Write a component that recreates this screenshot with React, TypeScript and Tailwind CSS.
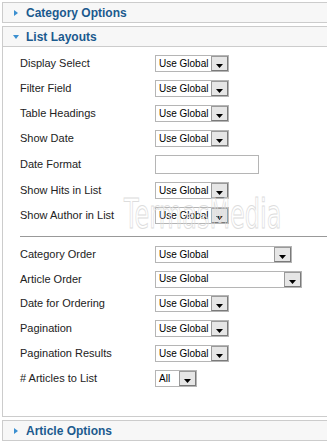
import React from "react";

const font = { fontFamily: '"Liberation Sans", Arial, sans-serif' };

function Arrow({ down }: { down?: boolean }) {
  return down ? (
    <svg width="8" height="6" viewBox="0 0 8 6" className="mr-[6px] ml-[9px] shrink-0">
      <polygon points="1,1 7,1 4,5" fill="#3b8fd0" />
    </svg>
  ) : (
    <svg width="8" height="8" viewBox="0 0 8 8" className="mr-[6px] ml-[9px] shrink-0">
      <polygon points="2,1 6,4 2,7" fill="#3b8fd0" />
    </svg>
  );
}

function Header({ title, down }: { title: string; down?: boolean }) {
  return (
    <div className="h-[19px] flex items-center bg-[#f7f7f7]">
      <Arrow down={down} />
      <span className="text-[12px] font-bold text-[#1b5a8e] leading-none whitespace-nowrap">{title}</span>
    </div>
  );
}

function Select({ value, width }: { value: string; width: number }) {
  return (
    <div
      className="h-[17px] border border-[#b5b5b5] bg-white flex items-center justify-between shrink-0"
      style={{ width }}
    >
      <span className="text-[10px] text-black pl-[3px] leading-none whitespace-nowrap">{value}</span>
      <div className="w-[17px] h-[15px] shrink-0 border border-[#7a7a7a] border-t-[#9a9a9a] border-l-[#9a9a9a] bg-[#e6e6e6] flex items-end justify-center pb-[2px]">
        <svg width="7" height="4" viewBox="0 0 7 4">
          <polygon points="0,0 7,0 3.5,4" fill="#000" />
        </svg>
      </div>
    </div>
  );
}

function Row({ label, children, h = 25 }: { label: string; children: React.ReactNode; h?: number }) {
  return (
    <div className="flex items-center" style={{ height: h }}>
      <div className="w-[135px] shrink-0 text-[11px] text-[#222] leading-none whitespace-nowrap">{label}</div>
      {children}
    </div>
  );
}

export default function App() {
  return (
    <div className="w-[327px] h-[443px] overflow-hidden bg-white relative" style={font}>
      <div className="pt-[2px] pl-[2px] w-[360px]">
        <div className="border border-[#cccccc]">
          <Header title="Category Options" />
        </div>
        <div className="border border-[#cccccc] mt-[3px]">
          <div className="border-b border-[#cccccc]">
            <Header title="List Layouts" down />
          </div>
          <div className="pl-[17px] pt-[4px] pb-[25px]">
            <Row label="Display Select"><Select value="Use Global" width={74} /></Row>
            <Row label="Filter Field"><Select value="Use Global" width={74} /></Row>
            <Row label="Table Headings"><Select value="Use Global" width={74} /></Row>
            <Row label="Show Date"><Select value="Use Global" width={74} /></Row>
            <Row label="Date Format" h={27}>
              <div className="w-[104px] h-[19px] border border-[#b5b5b5] bg-white" />
            </Row>
            <Row label="Show Hits in List"><Select value="Use Global" width={74} /></Row>
            <Row label="Show Author in List"><Select value="Use Global" width={74} /></Row>
            <div className="mt-[8px] mb-[5px] border-t border-[#999999]" />
            <Row label="Category Order"><Select value="Use Global" width={137} /></Row>
            <Row label="Article Order" h={24}><Select value="Use Global" width={147} /></Row>
            <Row label="Date for Ordering"><Select value="Use Global" width={74} /></Row>
            <Row label="Pagination"><Select value="Use Global" width={74} /></Row>
            <Row label="Pagination Results"><Select value="Use Global" width={74} /></Row>
            <Row label="# Articles to List"><Select value="All" width={42} /></Row>
          </div>
        </div>
        <div className="border border-[#cccccc] mt-[3px]">
          <Header title="Article Options" />
        </div>
      </div>
      <div
        className="absolute left-[124px] top-[194px] text-[40px] leading-none text-transparent pointer-events-none [-webkit-text-stroke:1px_#dddddd] origin-left scale-x-[0.6]"
        style={{ fontFamily: '"DejaVu Sans", sans-serif' }}
      >
        TermasMedia
      </div>
    </div>
  );
}
